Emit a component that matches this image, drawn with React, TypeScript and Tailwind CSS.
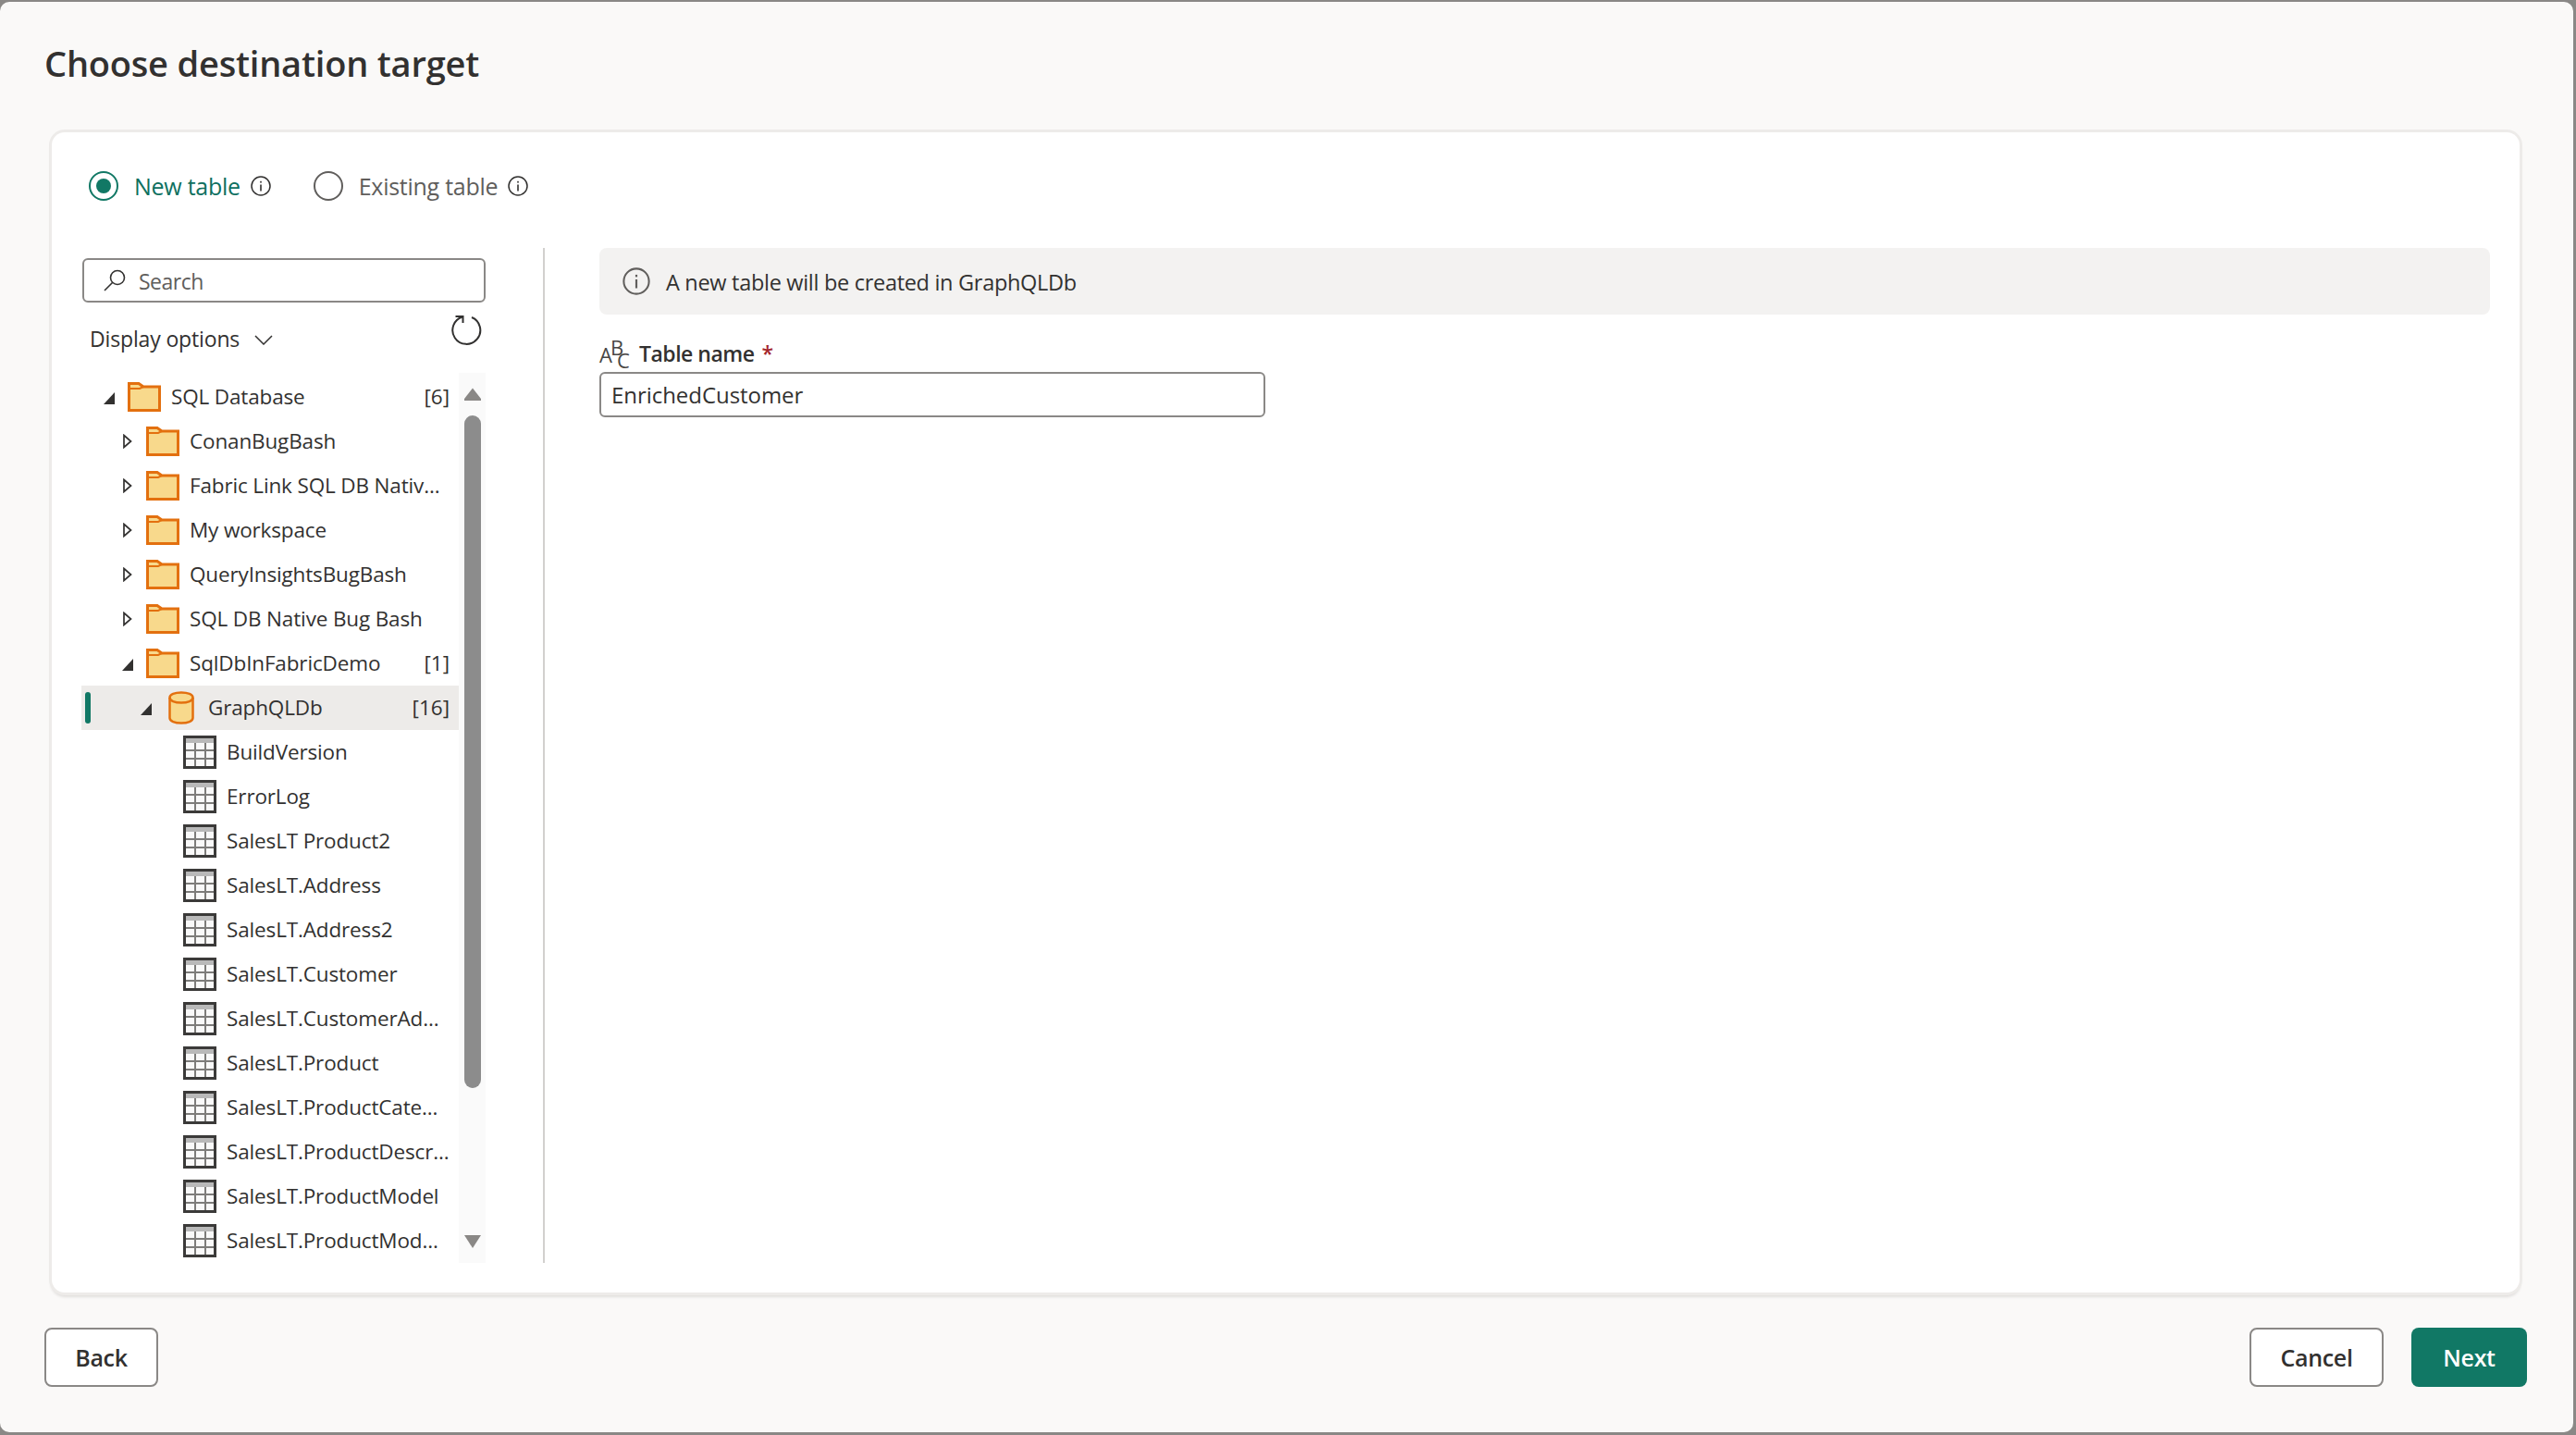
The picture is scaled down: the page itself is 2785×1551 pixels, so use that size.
const FONT = "font-['Open_Sans','Noto_Sans',sans-serif]";

type Item = { label: string; count?: string; kind: "root" | "folder" | "db" | "table"; open?: boolean };

const ITEMS: Item[] = [
  { label: "SQL Database", count: "[6]", kind: "root", open: true },
  { label: "ConanBugBash", kind: "folder" },
  { label: "Fabric Link SQL DB Nativ...", kind: "folder" },
  { label: "My workspace", kind: "folder" },
  { label: "QueryInsightsBugBash", kind: "folder" },
  { label: "SQL DB Native Bug Bash", kind: "folder" },
  { label: "SqlDbInFabricDemo", count: "[1]", kind: "folder", open: true },
  { label: "GraphQLDb", count: "[16]", kind: "db", open: true },
  { label: "BuildVersion", kind: "table" },
  { label: "ErrorLog", kind: "table" },
  { label: "SalesLT Product2", kind: "table" },
  { label: "SalesLT.Address", kind: "table" },
  { label: "SalesLT.Address2", kind: "table" },
  { label: "SalesLT.Customer", kind: "table" },
  { label: "SalesLT.CustomerAd...", kind: "table" },
  { label: "SalesLT.Product", kind: "table" },
  { label: "SalesLT.ProductCate...", kind: "table" },
  { label: "SalesLT.ProductDescr...", kind: "table" },
  { label: "SalesLT.ProductModel", kind: "table" },
  { label: "SalesLT.ProductMod...", kind: "table" },
];

function InfoIcon({ size = 22, color = "#323130" }: { size?: number; color?: string }) {
  return (
    <svg width={size} height={size} viewBox="0 0 22 22" fill="none" className="flex-none">
      <circle cx="11" cy="11" r="10" stroke={color} strokeWidth="1.5" />
      <rect x="10.2" y="9.5" width="1.6" height="7" fill={color} />
      <rect x="10.2" y="5.8" width="1.6" height="1.8" fill={color} />
    </svg>
  );
}

function FolderIcon() {
  return (
    <svg width="36" height="32" viewBox="0 0 36 32" fill="none" className="flex-none">
      <path d="M1.5 1.5H12L17 5H34.5V30.5H1.5Z" fill="#f8d98c" stroke="#e3700f" strokeWidth="3" />
      <path d="M1.5 7H13L17 5" stroke="#e3700f" strokeWidth="2" />
    </svg>
  );
}

function DbIcon() {
  return (
    <svg width="28" height="36" viewBox="0 0 28 36" fill="none" className="flex-none">
      <path
        d="M1.5 7V29C1.5 32.5 7 34.5 14 34.5S26.5 32.5 26.5 29V7C26.5 3.5 21 1.5 14 1.5S1.5 3.5 1.5 7Z"
        fill="#f8d98c"
        stroke="#e3700f"
        strokeWidth="2.5"
      />
      <path d="M1.5 7C1.5 10.5 7 12.5 14 12.5S26.5 10.5 26.5 7" stroke="#e3700f" strokeWidth="2.5" />
    </svg>
  );
}

function TableIcon() {
  return (
    <svg width="36" height="36" viewBox="0 0 36 36" fill="none" className="flex-none">
      <rect x="1.5" y="1.5" width="33" height="33" fill="#f9f9f9" />
      <rect x="2" y="2" width="32" height="6" fill="#b9b9b9" />
      <path d="M13 8V34M24 8V34M2 16H34M2 25H34" stroke="#7d7c7a" strokeWidth="2" />
      <rect x="1.5" y="1.5" width="33" height="33" stroke="#3b3a39" strokeWidth="3" />
    </svg>
  );
}

function Caret({ open }: { open?: boolean }) {
  if (open) {
    return (
      <svg width="12" height="13" viewBox="0 0 12 13" className="flex-none">
        <path d="M12 0V13H0Z" fill="#323130" />
      </svg>
    );
  }
  return (
    <svg width="10" height="16" viewBox="0 0 10 16" fill="none" className="flex-none">
      <path d="M1 1.5L8.5 8L1 14.5Z" stroke="#323130" strokeWidth="1.7" />
    </svg>
  );
}

function TreeRow({ item }: { item: Item }) {
  const selected = item.kind === "db";
  return (
    <div className={`relative flex h-[48px] flex-none items-center pr-[10px] ${selected ? "bg-[#edebe9]" : ""}`}>
      {selected && <span className="absolute left-[4px] top-[7px] h-[34px] w-[6px] rounded-full bg-[#117865]" />}
      {item.kind === "root" && (
        <div className="flex items-center pl-[24px]">
          <span className="mt-[3px] flex w-[26px] flex-none"><Caret open /></span>
          <FolderIcon />
        </div>
      )}
      {item.kind === "folder" && (
        <div className="flex items-center pl-[44px]">
          <span className={`flex w-[26px] flex-none ${item.open ? "mt-[3px]" : "pl-[1px]"}`}>
            <Caret open={item.open} />
          </span>
          <FolderIcon />
        </div>
      )}
      {item.kind === "db" && (
        <div className="flex items-center pl-[64px]">
          <span className="mt-[3px] flex w-[30px] flex-none"><Caret open /></span>
          <DbIcon />
        </div>
      )}
      {item.kind === "table" && (
        <div className="flex items-center pl-[110px]">
          <TableIcon />
        </div>
      )}
      <span
        className={`min-w-0 flex-1 whitespace-nowrap text-[22.5px] tracking-[-0.15px] text-[#323130] ${
          item.kind === "db" ? "ml-[15px]" : "ml-[11px]"
        }`}
      >
        {item.label}
      </span>
      {item.count && <span className="text-[22.5px] text-[#323130]">{item.count}</span>}
    </div>
  );
}

function Radio({ label, checked }: { label: string; checked?: boolean }) {
  return (
    <div className="flex items-center">
      <span
        className={`flex h-[32px] w-[32px] items-center justify-center rounded-full border-[2.5px] ${
          checked ? "border-[#117865]" : "border-[#605e5c]"
        }`}
      >
        {checked && <span className="h-[16px] w-[16px] rounded-full bg-[#117865]" />}
      </span>
      <span
        className={`ml-[17px] mr-[11px] text-[25px] leading-[32px] tracking-[-0.27px] ${
          checked ? "text-[#0e7060]" : "text-[#605e5c]"
        }`}
      >
        {label}
      </span>
      <InfoIcon />
    </div>
  );
}

function Button({ label, primary, w }: { label: string; primary?: boolean; w: string }) {
  return (
    <button
      type="button"
      className={`flex h-[64px] items-center justify-center rounded-[8px] pt-[2px] text-[25px] font-semibold tracking-[-0.3px] ${w} ${
        primary ? "bg-[#117865] text-white" : "border-[2.5px] border-[#8a8886] bg-white text-[#323130]"
      }`}
    >
      {label}
    </button>
  );
}

export default function App() {
  return (
    <div className={`h-[1551px] w-[2785px] overflow-hidden bg-[#8a8886] pb-[3px] pr-[3px] pt-[2px] ${FONT}`}>
      <div className="flex h-full flex-col rounded-[10px] bg-[#faf9f8]">
        <h1 className="pl-[48px] pt-[40px] text-[38px] font-semibold leading-[52px] tracking-[-0.2px] text-[#323130]">
          Choose destination target
        </h1>

        <div className="ml-[56px] mr-[58px] mt-[49px] flex h-[1254px] flex-col rounded-[14px] bg-white pb-[32px] pl-[32px] pr-[32px] pt-[42px] shadow-[0_0_0_3px_#edebe9,0_4px_3px_1px_#e1dfdd]">
          <div className="flex items-center gap-[46px] pl-[8px]">
            <Radio label="New table" checked />
            <Radio label="Existing table" />
          </div>

          <div className="mt-[51px] flex min-h-0 flex-1">
            <div className="flex w-[437px] flex-none flex-col pl-0 pt-[11px]">
              <div className="ml-px flex h-[48px] items-center rounded-[6px] border-[2.5px] border-[#8a8886] pl-[21px]">
                <svg width="24" height="24" viewBox="0 0 24 24" fill="none" className="flex-none">
                  <circle cx="15" cy="9" r="7.5" stroke="#323130" strokeWidth="1.6" />
                  <path d="M9.5 14.5L1 23" stroke="#323130" strokeWidth="1.6" />
                </svg>
                <span className="ml-[14px] mt-[2px] text-[23px] tracking-[-0.5px] text-[#605e5c]">Search</span>
              </div>

              <div className="relative flex h-[76px] flex-none items-center pl-[9px]">
                <span className="mt-[2px] text-[23px] tracking-[-0.15px] text-[#323130]">Display options</span>
                <svg width="20" height="11" viewBox="0 0 20 11" fill="none" className="ml-[16px] mt-[4px]">
                  <path d="M1 1L10 10L19 1" stroke="#323130" strokeWidth="1.5" />
                </svg>
                <svg width="34" height="34" viewBox="0 0 34 34" fill="none" className="absolute left-[400px] top-[14px]">
                  <path d="M22 2A15 15 0 1 1 12 1.5" stroke="#323130" strokeWidth="2" />
                  <path d="M4.5 1H12.5V8" stroke="#323130" strokeWidth="2" />
                </svg>
              </div>

              <div className="flex min-h-0 flex-1">
                <div className="flex min-w-0 flex-1 flex-col pt-[2px]">
                  {ITEMS.map((item) => (
                    <TreeRow key={item.label} item={item} />
                  ))}
                </div>
                <div className="flex w-[29px] flex-none flex-col items-center bg-[#fafafa] pl-px pt-[16px]">
                  <svg width="18" height="14" viewBox="0 0 18 14">
                    <path d="M9 0.5L18 12V14H0V12Z" fill="#8a8886" />
                  </svg>
                  <span className="mt-[16px] h-[727px] w-[18px] flex-none rounded-full bg-[#8c8c8c]" />
                  <svg width="18" height="14" viewBox="0 0 18 14" className="mt-[159px]">
                    <path d="M0 0H18L9 14Z" fill="#8a8886" />
                  </svg>
                </div>
              </div>
            </div>

            <div className="ml-[62px] w-[2px] flex-none bg-[#d2d0ce]" />

            <div className="min-w-0 flex-1 pl-[59px]">
              <div className="flex h-[72px] items-center rounded-[8px] bg-[#f3f2f1] pl-[25px]">
                <InfoIcon size={30} color="#605e5c" />
                <span className="ml-[17px] mt-[3px] text-[23.5px] tracking-[-0.3px] text-[#323130]">
                  A new table will be created in GraphQLDb
                </span>
              </div>

              <div className="mt-[27px] flex h-[34px] items-center">
                <svg width="34" height="32" viewBox="0 0 34 32" className="flex-none overflow-visible">
                  <text x="0" y="24" fontSize="22" fill="#484644" fontFamily="Open Sans">A</text>
                  <text x="12" y="16" fontSize="22" fill="#484644" fontFamily="Open Sans">B</text>
                  <text x="19" y="30" fontSize="22" fill="#484644" fontFamily="Open Sans">C</text>
                </svg>
                <span className="mb-[3px] ml-[9px] text-[23px] font-semibold tracking-[-0.5px] text-[#323130]">Table name</span>
                <span className="mb-[3px] ml-[8px] text-[23px] font-semibold text-[#a4262c]">*</span>
              </div>

              <div className="mt-px flex h-[49px] w-[720px] items-center rounded-[6px] border-[2.5px] border-[#8a8886] pl-[11px]">
                <span className="text-[24px] tracking-[-0.05px] text-[#323130]">EnrichedCustomer</span>
              </div>
            </div>
          </div>
        </div>

        <div className="mt-[38px] flex items-start pl-[48px] pr-[50px]">
          <Button label="Back" w="w-[123px]" />
          <div className="flex-1" />
          <Button label="Cancel" w="w-[145px]" />
          <div className="w-[30px]" />
          <Button label="Next" primary w="w-[125px]" />
        </div>
      </div>
    </div>
  );
}
